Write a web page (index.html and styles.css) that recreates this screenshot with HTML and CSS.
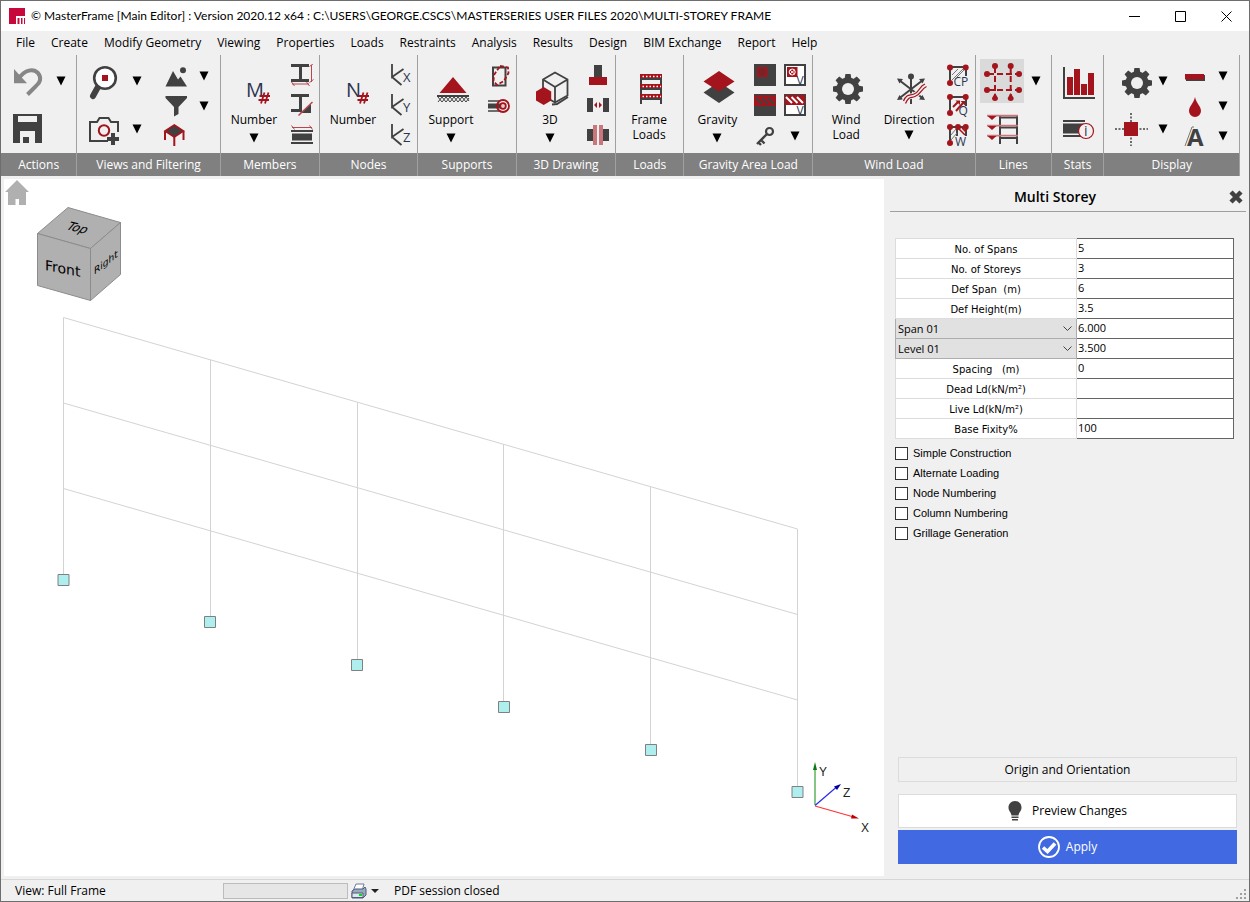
FILE: index.html
```html
<!DOCTYPE html>
<html lang="en">
<head>
<meta charset="utf-8">
<title>MasterFrame</title>
<link rel="stylesheet" href="styles.css">
</head>
<body>
<svg class="defs" aria-hidden="true">
  <defs>
    <symbol id="tri" viewBox="0 0 10 10"><path d="M0.5 0.5H9.5L5 9.5Z" fill="#000"/></symbol>
    <symbol id="gear" viewBox="-15 -15 30 30">
      <g fill="#414141"><circle r="11.5"/>
      <path id="tooth" d="M-3.4-10L-2.6-15H2.6L3.4-10ZM-3.4 10L-2.6 15H2.6L3.4 10Z"/>
      <use href="#tooth" transform="rotate(45)"/><use href="#tooth" transform="rotate(90)"/><use href="#tooth" transform="rotate(135)"/></g>
      <circle r="6" fill="#f0f0f0"/>
    </symbol>
  </defs>
</svg>
<div class="window">
  <header class="titlebar">
    <svg class="logo" viewBox="0 0 16 16"><path fill="#c8073a" d="M0 0H16V16H0Z"/><path fill="#fff" d="M7 8H16V10H7ZM7 8H8.500V16H7ZM10.500 8H12V16H10.500ZM13.500 8H15V16H13.500Z"/></svg>
    <h1 class="title">© MasterFrame [Main Editor] : Version 2020.12 x64 : C:\USERS\GEORGE.CSCS\MASTERSERIES USER FILES 2020\MULTI-STOREY FRAME</h1>
    <div class="win-controls">
      <button aria-label="Minimize"><svg viewBox="0 0 11 11"><path d="M0 5.500H11"/></svg></button>
      <button aria-label="Maximize"><svg viewBox="0 0 11 11"><path d="M.5.5H10.500V10.500H.5Z"/></svg></button>
      <button aria-label="Close"><svg viewBox="0 0 11 11"><path d="M.5.5L10.500 10.500M10.500.5L.5 10.500"/></svg></button>
    </div>
  </header>

  <nav class="menubar">
    <button>File</button><button>Create</button><button>Modify Geometry</button><button>Viewing</button><button>Properties</button><button>Loads</button><button>Restraints</button><button>Analysis</button><button>Results</button><button>Design</button><button>BIM Exchange</button><button>Report</button><button>Help</button>
  </nav>

  <div class="ribbon">
    <section class="group g-actions">
      <div class="tools">
        <div class="stack pair">
          <button aria-label="Undo"><svg class="i40" viewBox="8 61 40 40"><path d="M14 69V83.300H27Z" fill="#868686"/><path d="M19 78C25 70 33 68 38 73C42 78 40 83 36 86L27.500 94.500" fill="none" stroke="#868686" stroke-width="4"/></svg></button>
          <button aria-label="Save"><svg class="i40" viewBox="8 109 40 40"><path d="M13 114H42V143H13Z" fill="#414141"/><path d="M18 116H37V122H18ZM20 131H35V143H29V137H23V143H20Z" fill="#f0f0f0"/></svg></button>
        </div>
        <div class="stack pair arrows"><button aria-label="Undo options"><svg class="tri"><use href="#tri"/></svg></button></div>
      </div>
      <h2>Actions</h2>
    </section>

    <section class="group g-views">
      <div class="tools">
        <div class="stack pair">
          <button aria-label="Zoom"><svg class="i40" viewBox="84 61 40 40"><path d="M98.500 86L93 96" stroke="#414141" stroke-width="6" stroke-linecap="round"/><circle cx="105" cy="78" r="10.800" fill="#fff" stroke="#414141" stroke-width="2.600"/><path d="M102 75H108V81H102Z" fill="#a3141c"/></svg></button>
          <button aria-label="Snapshot"><svg class="i40" viewBox="84 109 40 40"><path d="M108 141H90V122H97L99.500 118H108.500L111 122H118V132" fill="none" stroke="#414141" stroke-width="2"/><circle cx="104" cy="130.500" r="5.200" fill="none" stroke="#a3141c" stroke-width="2"/><path d="M111 133H115V137H119V141H115V145H111V141H107V137H111Z" fill="#414141"/></svg></button>
        </div>
        <div class="stack pair arrows"><button aria-label="Zoom options"><svg class="tri"><use href="#tri"/></svg></button><button aria-label="Snapshot options"><svg class="tri"><use href="#tri"/></svg></button></div>
        <div class="stack trio first-small">
          <button aria-label="Views"><svg class="i24" viewBox="163 64 24 24"><path d="M165.500 86.500L173 71L178 79.500L180.500 76.500L187 86.500Z" fill="#414141"/><circle cx="183" cy="70.300" r="3" fill="#414141"/></svg></button>
          <button aria-label="Filter"><svg class="i24" viewBox="163 94 24 24"><path d="M165.500 96H187V98L178.500 107V114L174 116.500V107L165.500 98Z" fill="#414141"/></svg></button>
          <button aria-label="Surface"><svg class="i24" viewBox="163 124 24 24"><path d="M174.300 125L183.500 131L174.300 137L165 131Z" fill="#414141" stroke="#a3141c" stroke-width="1.600"/><path d="M165 131V140M183.500 131V140M174.300 137V146" stroke="#a3141c" stroke-width="2"/></svg></button>
        </div>
        <div class="stack trio arrows"><button aria-label="View options"><svg class="tri"><use href="#tri"/></svg></button><button aria-label="Filter options"><svg class="tri"><use href="#tri"/></svg></button></div>
      </div>
      <h2>Views and Filtering</h2>
    </section>

    <section class="group g-members">
      <div class="tools">
        <button class="big"><svg class="i40" viewBox="234 69 40 40"><text x="246" y="97" class="glyph g20">M</text><path d="M264.500 92.500L261 103.500M268.500 92.500L265 103.500M259.500 96H270M258.500 100H269" stroke="#a3141c" stroke-width="1.800"/></svg><span>Number</span><svg class="tri"><use href="#tri"/></svg></button>
        <div class="stack trio">
          <button aria-label="Section sizes"><svg class="i24" viewBox="290 64 24 24"><path d="M291 65.500H309M300.500 65V81M291 80.500H309" stroke="#414141" stroke-width="3" fill="none"/><path d="M311.500 65V82M309.500 66.500L313.500 63.500M309.500 82.500L313.500 79.500M292 84H309M291.500 82L294.500 86M306.500 82L309.500 86" stroke="#b8474d" fill="none"/></svg></button>
          <button aria-label="Section axes"><svg class="i24" viewBox="290 94 24 24"><path d="M291 95.500H309M300.500 95V111M291 110.500H302" stroke="#414141" stroke-width="3" fill="none"/><path d="M300 113L311 104V113Z" fill="#414141"/><path d="M298.500 115.500L312.500 102" stroke="#b8474d" stroke-width="1.500"/></svg></button>
          <button aria-label="Member length"><svg class="i24" viewBox="290 124 24 24"><path d="M292 127.500H312M291.500 125.500L294.500 129.500M309.500 125.500L312.500 129.500" stroke="#b8474d"/><path d="M291 131H313M291 143H313" stroke="#414141" stroke-width="2"/><path d="M292 133.500H312V140.500H292Z" fill="#414141"/></svg></button>
        </div>
      </div>
      <h2>Members</h2>
    </section>

    <section class="group g-nodes">
      <div class="tools">
        <button class="big"><svg class="i40" viewBox="333 69 40 40"><text x="346" y="97" class="glyph g20">N</text><path d="M363.500 92.500L360 103.500M367.500 92.500L364 103.500M358.500 96H369M357.500 100H368" stroke="#a3141c" stroke-width="1.800"/></svg><span>Number</span></button>
        <div class="stack trio">
          <button aria-label="X axis"><svg class="i24" viewBox="389 64 24 24"><path d="M392 64V77L403.500 69M392 77L401.500 85" fill="none" stroke="#414141" stroke-width="1.800"/><text x="403" y="82" class="glyph g13">X</text></svg></button>
          <button aria-label="Y axis"><svg class="i24" viewBox="389 94 24 24"><path d="M392 94V107L403.500 99M392 107L401.500 115" fill="none" stroke="#414141" stroke-width="1.800"/><text x="403" y="112" class="glyph g13">Y</text></svg></button>
          <button aria-label="Z axis"><svg class="i24" viewBox="389 124 24 24"><path d="M392 124V137L403.500 129M392 137L401.500 145" fill="none" stroke="#414141" stroke-width="1.800"/><text x="403" y="142" class="glyph g13">Z</text></svg></button>
        </div>
      </div>
      <h2>Nodes</h2>
    </section>

    <section class="group g-supports">
      <div class="tools">
        <button class="big"><svg class="i40" viewBox="431 69 40 40"><path d="M453 77L466.500 93H439.500Z" fill="#a3141c"/><path d="M437 96H469" stroke="#414141" stroke-width="2"/><path d="M438 97L442 102L446 97L450 102L454 97L458 102L462 97L466 102L469 98M438 102L442 97L446 102L450 97L454 102L458 97L462 102L466 97L469 101" fill="none" stroke="#414141"/></svg><span>Support</span><svg class="tri"><use href="#tri"/></svg></button>
        <div class="stack trio">
          <button aria-label="Releases"><svg class="i24" viewBox="487 64 24 24"><path d="M493 67.500H505.500V85.500H493Z" fill="none" stroke="#414141" stroke-width="2"/><path d="M500 66L508 67.500L508.500 73L504 81L497 85L493.500 81L494 75Z" fill="none" stroke="#a3141c" stroke-width="1.800" stroke-dasharray="4 2"/></svg></button>
          <button aria-label="Springs"><svg class="i24" viewBox="487 94 24 24"><path d="M488 101H500M488 111H500" stroke="#414141" stroke-width="1.600"/><path d="M488 103.500H502V108.500H488Z" fill="#414141"/><circle cx="503" cy="106" r="6" fill="none" stroke="#a3141c" stroke-width="1.800"/><circle cx="503" cy="106" r="2.800" fill="#e8c8ca" stroke="#a3141c" stroke-width="1.800"/></svg></button>
        </div>
      </div>
      <h2>Supports</h2>
    </section>

    <section class="group g-drawing">
      <div class="tools">
        <button class="big"><svg class="i40" viewBox="530 69 40 40"><path d="M555 72.500L567.500 79.500V95.500L555 102.500L543 95.500V79.500ZM543 79.500L555 87L567.500 79.500M555 87V102" fill="none" stroke="#414141" stroke-width="1.800"/><path d="M552 104.500L557 104L568 97" fill="none" stroke="#414141" stroke-width="2"/><path d="M543.700 87L551.200 91.500V100.500L543.700 105L536 100.500V91.500Z" fill="#a3141c"/></svg><span>3D</span><svg class="tri"><use href="#tri"/></svg></button>
        <div class="stack trio">
          <button aria-label="Base"><svg class="i24" viewBox="586 64 24 24"><path d="M594 65H602V77H594Z" fill="#414141"/><path d="M589 77H607V85H589Z" fill="#a3141c"/></svg></button>
          <button aria-label="Gap"><svg class="i24" viewBox="586 94 24 24"><path d="M587 98H593V112H587ZM603 98H609V112H603Z" fill="#414141"/><path d="M594 105L597 102V108ZM602 105L599 102V108Z" fill="#a3141c"/></svg></button>
          <button aria-label="Splice"><svg class="i24" viewBox="586 124 24 24"><path d="M587 129H594V141H587ZM602 129H609V141H602Z" fill="#414141"/><path d="M593 125H597V145H593ZM599 125H603V145H599Z" fill="#c9777c"/></svg></button>
        </div>
      </div>
      <h2>3D Drawing</h2>
    </section>

    <section class="group g-loads">
      <div class="tools">
        <button class="big"><svg class="i40" viewBox="629 69 40 40"><path d="M641 74V104M661 74V104M640 79H662M640 89H662M640 99H662" stroke="#414141" stroke-width="2"/><path d="M640 76H662M640 86H662M640 96H662" stroke="#a3141c" stroke-width="4"/><path d="M642.500 76.500H661M642.500 86.500H661M642.500 96.500H661" stroke="#fff" stroke-width="1.600" stroke-dasharray="1.500 2"/></svg><span>Frame<br>Loads</span></button>
      </div>
      <h2>Loads</h2>
    </section>

    <section class="group g-gravity">
      <div class="tools">
        <button class="big"><svg class="i40" viewBox="697 69 40 40"><path d="M719 82L734.500 92.500L719 103L703.500 92.500Z" fill="#414141"/><path d="M719 71L734.500 81.500L719 91.500L703.500 81.500Z" fill="#a3141c"/></svg><span>Gravity</span><svg class="tri"><use href="#tri"/></svg></button>
        <div class="stack trio">
          <button aria-label="Point load"><svg class="i24" viewBox="753 64 24 24"><path d="M754 64H776V86H754Z" fill="#414141"/><path d="M757 67H767.500V77H757Z" fill="#a3141c"/><g fill="none" stroke="#553034"><circle cx="762.200" cy="72" r="3"/><path d="M760 70L764.500 74M764.500 70L760 74"/></g></svg></button>
          <button aria-label="Area load"><svg class="i24" viewBox="753 94 24 24"><path d="M754 94H776V116H754Z" fill="#414141"/><path d="M754 95.500H776V106H754Z" fill="#a3141c"/><path d="M756 98L762 104M762 98L768 104M768 98L774 104" stroke="#414141" stroke-width="2"/></svg></button>
          <button aria-label="Key"><svg class="i24" viewBox="753 124 24 24"><circle cx="769.500" cy="131.500" r="3.500" fill="none" stroke="#414141" stroke-width="2.200"/><path d="M767 134L757 144M761 140L764.500 143.500M758 142L761 145" fill="none" stroke="#414141" stroke-width="2.400"/></svg></button>
        </div>
        <div class="stack trio second-small">
          <button aria-label="Void point load"><svg class="i24" viewBox="783 64 24 24"><path d="M785 65H805V85H785Z" fill="#fff" stroke="#414141" stroke-width="2"/><path d="M787 67H797.500V77H787Z" fill="#a3141c"/><g fill="none" stroke="#fff"><circle cx="792.200" cy="72" r="3"/><path d="M790 70L794.500 74M794.500 70L790 74"/></g><text x="796.500" y="84.500" class="glyph g12">V</text></svg></button>
          <button aria-label="Void area load"><svg class="i24" viewBox="783 94 24 24"><path d="M785 95H805V115H785Z" fill="#fff" stroke="#414141" stroke-width="2"/><path d="M785 95H805V105H785Z" fill="#a3141c"/><path d="M786 97L792 103M791.500 97L797.500 103M797 97L803 103" stroke="#fff" stroke-width="2"/><text x="796.500" y="114.500" class="glyph g12">V</text></svg></button>
          <button aria-label="Key options"><svg class="tri"><use href="#tri"/></svg></button>
        </div>
      </div>
      <h2>Gravity Area Load</h2>
    </section>

    <section class="group g-wind">
      <div class="tools">
        <button class="big"><svg class="i40" viewBox="826 69 40 40"><use href="#gear" x="833" y="74" width="30" height="30"/></svg><span>Wind<br>Load</span></button>
        <button class="big wide"><svg class="i40" viewBox="889 69 40 40"><circle cx="911" cy="76.500" r="3" fill="#414141"/><path d="M911 76V104M899 80L923 98.500M923 80L899 98.500" stroke="#414141" stroke-width="2"/><path d="M897 78.500L903 79L899.500 83.500ZM925 78.500L919 79L922.500 83.500ZM897 100L903 99.500L899.500 95ZM925 100L919 99.500L922.500 95Z" fill="#414141"/><path d="M903.500 101C907 93 910 96 914 94C920 92 919 86 925 84M905.500 103.500C909 95.500 911 98.500 915 96.500C921 94.500 921 89 926.500 86.500" stroke="#f0f0f0" stroke-width="3" fill="none"/><path d="M903.500 101C907 93 910 96 914 94C920 92 919 86 925 84M905.500 103.500C909 95.500 911 98.500 915 96.500C921 94.500 921 89 926.500 86.500" stroke="#a3141c" stroke-width="1.300" fill="none"/></svg><span>Direction</span><svg class="tri"><use href="#tri"/></svg></button>
        <div class="stack trio wind-small">
          <button aria-label="Pressure coefficients"><svg class="i24" viewBox="946 64 24 24"><path d="M950 82V67H966V76" fill="none" stroke="#414141" stroke-width="2"/><path d="M952 75L958 69M952 80L963 69M957 77L965 69" stroke="#777"/><g fill="#a3141c"><circle cx="950" cy="67.500" r="3"/><circle cx="965.700" cy="67.500" r="3"/><circle cx="950" cy="83" r="3"/></g><text x="953.500" y="85.500" class="glyph g12">CP</text></svg></button>
          <button aria-label="Wind pressure"><svg class="i24" viewBox="946 94 24 24"><path d="M950 112V97H966V106" fill="none" stroke="#414141" stroke-width="2"/><path d="M953 107L958 102M956 111L963 103" stroke="#a3141c" stroke-width="2"/><path d="M955.500 100.500H960V105ZM960.500 101H965V105.500Z" fill="#a3141c"/><g fill="#a3141c"><circle cx="950" cy="97" r="3"/><circle cx="965.700" cy="97" r="3"/><circle cx="950" cy="113" r="3"/></g><text x="958.500" y="115" class="glyph g12">Q</text></svg></button>
          <button aria-label="Wind load area"><svg class="i24" viewBox="946 124 24 24"><path d="M950 142V127H966V136M957 127V136" fill="none" stroke="#414141" stroke-width="2"/><path d="M951 135L956 129M951 140L957 133" stroke="#777"/><path d="M958 128L965 135M962 128L966 132" stroke="#a3141c" stroke-width="1.500"/><g fill="#a3141c"><circle cx="950" cy="127" r="3"/><circle cx="958" cy="127" r="3"/><circle cx="965.700" cy="127" r="3"/><circle cx="950" cy="143" r="3"/></g><text x="955" y="145.500" class="glyph g12">W</text></svg></button>
        </div>
      </div>
      <h2>Wind Load</h2>
    </section>

    <section class="group g-lines">
      <div class="tools">
        <div class="stack pair">
          <button class="active" aria-label="Grid lines"><svg class="i44" viewBox="980 60 44 44"><path d="M995 68V98M1010.700 68V98M988 75H1018M988 91H1018" stroke="#a3141c" stroke-width="2" stroke-dasharray="6 3"/><g fill="#a3141c"><circle cx="995" cy="67" r="3"/><circle cx="1010.700" cy="67" r="3"/><circle cx="987" cy="75" r="3"/><circle cx="1019" cy="75" r="3"/><circle cx="987" cy="91" r="3"/><circle cx="1019" cy="91" r="3"/><path d="M995 94L998 99A3 3 0 1 1 992 99ZM1010.700 94L1013.700 99A3 3 0 1 1 1007.700 99Z"/></g></svg></button>
          <button aria-label="Storey levels"><svg class="i40" viewBox="982 109 40 40"><path d="M1000 116V144M1017 116V144M1000 117.500H1017M1000 127.500H1017M1000 138H1017" stroke="#414141" stroke-width="2"/><path d="M987 115.700H1018M987 125.700H1018M987 135.700H1018" stroke="#c9777c" stroke-width="1.800"/><path d="M987.500 116H996.500L992 120ZM987.500 126H996.500L992 130ZM987.500 136H996.500L992 140Z" fill="#a3141c"/></svg></button>
        </div>
        <div class="stack pair arrows"><button aria-label="Grid options"><svg class="tri"><use href="#tri"/></svg></button></div>
      </div>
      <h2>Lines</h2>
    </section>

    <section class="group g-stats">
      <div class="tools">
        <div class="stack pair">
          <button aria-label="Chart"><svg class="i40" viewBox="1059 61 40 40"><path d="M1064 67V98H1095" fill="none" stroke="#414141" stroke-width="2"/><path d="M1067 77H1073V95H1067ZM1074 69H1080V95H1074ZM1081 84H1087V95H1081ZM1088 73H1094V95H1088Z" fill="#a3141c"/></svg></button>
          <button aria-label="Member information"><svg class="i40" viewBox="1059 109 40 40"><path d="M1063 121H1085M1063 136H1081" stroke="#414141" stroke-width="2"/><path d="M1063 123.500H1084V133.500H1063Z" fill="#414141"/><circle cx="1086" cy="131" r="7.500" fill="#f4f0f0" stroke="#a3141c" stroke-width="1.200"/><text x="1084" y="136" class="glyph g14">i</text></svg></button>
        </div>
      </div>
      <h2>Stats</h2>
    </section>

    <section class="group g-display">
      <div class="tools">
        <div class="stack pair">
          <button aria-label="Settings"><svg class="i44" viewBox="1109 60 44 44"><use href="#gear" x="1122" y="69" width="30" height="30"/></svg></button>
          <button aria-label="Node display"><svg class="i44" viewBox="1109 107 44 44"><path d="M1115 129H1148M1131 113V146" stroke="#414141" stroke-width="1.500" stroke-dasharray="2 1.500"/><path d="M1124 122H1138V136H1124Z" fill="#a3141c"/></svg></button>
        </div>
        <div class="stack pair arrows"><button aria-label="Settings options"><svg class="tri"><use href="#tri"/></svg></button><button aria-label="Node display options"><svg class="tri"><use href="#tri"/></svg></button></div>
        <div class="stack trio display-small">
          <button aria-label="Member line"><svg class="i24" viewBox="1183 64 24 24"><path d="M1186 75H1205V81H1186Z" fill="#414141"/><path d="M1185 74H1204V79.500H1185Z" fill="#a3141c"/></svg></button>
          <button aria-label="Colour"><svg class="i24" viewBox="1183 94 24 24"><path d="M1195 97C1196 103 1201 106 1201 111A6 6 0 0 1 1189 111C1189 106 1194 103 1195 97Z" fill="#a3141c"/></svg></button>
          <button aria-label="Text"><svg class="i24 spill" viewBox="1183 124 24 24"><path d="M1185 146L1192 127H1194" fill="none" stroke="#777"/><text x="1187" y="146" class="glyph bold g24">A</text></svg></button>
        </div>
        <div class="stack trio arrows display-arrows"><button aria-label="Line options"><svg class="tri"><use href="#tri"/></svg></button><button aria-label="Colour options"><svg class="tri"><use href="#tri"/></svg></button><button aria-label="Text options"><svg class="tri"><use href="#tri"/></svg></button></div>
      </div>
      <h2>Display</h2>
    </section>
  </div>

  <main class="workspace">
    <div class="canvas">
      <svg class="model" viewBox="4 179 880 697" preserveAspectRatio="xMinYMin meet">
        <path d="M17 180L29 192H26V205H19V199H15.500V205H8V192H5Z" fill="#b0b0b0"/>
        <g stroke="#8c8c8c" fill="#b0b0b0" stroke-linejoin="round">
          <path d="M68 207.500L120.500 222.500L90.500 248.500L37.500 233.500Z"/>
          <path d="M37.500 233.500L90.500 248.500V300.500L37.500 285.500Z"/>
          <path d="M90.500 248.500L120.500 222.500V274.500L90.500 300.500Z"/>
        </g>
        <g class="cube-label">
          <text x="0" y="0" font-size="14" transform="translate(45 270) skewY(11)">Front</text>
          <text class="narrow" x="0" y="0" font-size="10" transform="translate(94 275) skewY(-38)">Right</text>
          <text x="0" y="0" font-size="12" transform="translate(65 229) rotate(14) skewX(-26)">Top</text>
        </g>
        <g stroke="#d3d3d3" fill="none">
          <path d="M63.500 317.500L797.500 529M63.500 403L797.500 614.500M63.500 488.500L797.500 700"/>
          <path d="M63.500 317.500V575M210.500 360V617M357.500 402.500V660M503.500 444.500V702M650.500 487V745M797.500 529V787"/>
        </g>
        <g fill="#afeeee" stroke="#808080">
          <path d="M58 574.500H69V585.500H58ZM204.500 616.500H215.500V627.500H204.500ZM351.500 659.500H362.500V670.500H351.500ZM498.500 701.500H509.500V712.500H498.500ZM645.500 744.500H656.500V755.500H645.500ZM792 786.500H803V797.500H792Z"/>
        </g>
        <path d="M815 805V768" stroke="#5cb35f" stroke-width="1.500"/><path d="M815 762L817 770H813Z" fill="#0a7a10"/>
        <path d="M815 805.500L836 787.500" stroke="#2b2bef" stroke-width="1.200"/><path d="M841 784L837 790L834 786.500Z" fill="#0000a0"/>
        <path d="M815 806L852 816.500" stroke="#f33" stroke-width="1.200"/><path d="M859 818.500L851 818.500L852 814.500Z" fill="#c00000"/>
        <g class="axis-label"><text x="819" y="776">Y</text><text x="843" y="797">Z</text><text x="861" y="832">X</text></g>
      </svg>
    </div>

    <aside class="panel">
      <header class="panel-head">
        <h2>Multi Storey</h2>
        <button aria-label="Close panel"><svg viewBox="0 0 14 14"><path d="M2 2L12 12M12 2L2 12" stroke="#414141" stroke-width="4.500"/></svg></button>
      </header>
      <form class="panel-form">
        <table class="params">
          <tr><th><label for="f1">No. of Spans</label></th><td><input id="f1" value="5"></td></tr>
          <tr><th><label for="f2">No. of Storeys</label></th><td><input id="f2" value="3"></td></tr>
          <tr><th><label for="f3">Def Span&nbsp; (m)</label></th><td><input id="f3" value="6"></td></tr>
          <tr><th><label for="f4">Def Height(m)</label></th><td><input id="f4" value="3.5"></td></tr>
          <tr><th class="pick"><div class="select"><select aria-label="Span"><option>Span 01</option></select><svg viewBox="0 0 9 5"><path d="M.5.5L4.500 4.500L8.500.5"/></svg></div></th><td><input aria-label="Span length" value="6.000"></td></tr>
          <tr><th class="pick"><div class="select"><select aria-label="Level"><option>Level 01</option></select><svg viewBox="0 0 9 5"><path d="M.5.5L4.500 4.500L8.500.5"/></svg></div></th><td><input aria-label="Level height" value="3.500"></td></tr>
          <tr><th><label for="f7">Spacing&nbsp;&nbsp; (m)</label></th><td><input id="f7" value="0"></td></tr>
          <tr><th><label for="f8">Dead Ld(kN/m²)</label></th><td><input id="f8"></td></tr>
          <tr><th><label for="f9">Live Ld(kN/m²)</label></th><td><input id="f9"></td></tr>
          <tr><th><label for="f10">Base Fixity%</label></th><td><input id="f10" value="100"></td></tr>
        </table>
        <div class="checks">
          <label><input type="checkbox">Simple Construction</label>
          <label><input type="checkbox">Alternate Loading</label>
          <label><input type="checkbox">Node Numbering</label>
          <label><input type="checkbox">Column Numbering</label>
          <label><input type="checkbox">Grillage Generation</label>
        </div>
        <div class="panel-actions">
          <button type="button" class="origin">Origin and Orientation</button>
          <button type="button" class="preview"><svg viewBox="0 0 14 20"><path d="M7 0C11 0 13.500 3 13.500 6.500C13.500 10 11 11 10.500 14.500H3.500C3 11 .5 10 .5 6.500C.5 3 3 0 7 0ZM3.500 15.500H10.500V17H3.500ZM4 18H10V19.500H4Z" fill="#414141"/></svg>Preview Changes</button>
          <button type="button" class="apply"><svg viewBox="0 0 22 22"><circle cx="11" cy="11" r="10" fill="none" stroke="#fff" stroke-width="1.800"/><path d="M5 11.500L9.500 15.500L17 7.500" fill="none" stroke="#fff" stroke-width="3.600"/></svg>Apply</button>
        </div>
      </form>
    </aside>
  </main>

  <footer class="statusbar">
    <span class="view">View: Full Frame</span>
    <div class="progress"></div>
    <button class="print" aria-label="Print"><svg viewBox="0 0 28 16"><path d="M5 1H13L11 8H2Z" fill="#fff" stroke="#6d7c99"/><path d="M1 8L4 6H12L14 4L15 6V12L12 15H1Z" fill="#9aa9c2" stroke="#4d5c79"/><path d="M1 10H12V14.500H1Z" fill="#dfe5ef" stroke="#4d5c79"/><path d="M8 11H11V13H8Z" fill="#0bdc1c"/><path d="M20 6H28L24 10Z" fill="#222"/></svg></button>
    <span>PDF session closed</span>
    <svg class="grip" viewBox="0 0 10 10"><path d="M8 0H10V2H8ZM4 4H6V6H4ZM8 4H10V6H8ZM0 8H2V10H0ZM4 8H6V10H4ZM8 8H10V10H8Z" fill="#a0a0a0"/></svg>
  </footer>
</div>
</body>
</html>
```
FILE: styles.css
```css
* { box-sizing: border-box; }
body {
  margin: 0;
  font: 12px/16px "Open Sans", "Noto Sans", sans-serif;
  color: #000;
}
button, input, select { font: inherit; color: inherit; margin: 0; }
button { background: none; border: 0; padding: 0; }
svg { display: block; flex: none; }
h1, h2 { margin: 0; font: inherit; }
.defs { position: absolute; width: 0; height: 0; }

.window {
  display: flex;
  flex-direction: column;
  min-height: 100vh;
  border: 1px solid #6e6e6e;
  background: #f0f0f0;
}

.titlebar {
  display: flex;
  align-items: center;
  height: 30px;
  padding-left: 8px;
  background: #fff;
}
.logo { width: 16px; height: 16px; }
.title {
  flex: 1;
  padding-left: 6px;
  font-family: Lato, sans-serif;
  white-space: nowrap;
}
.win-controls { display: flex; }
.win-controls button {
  width: 46px;
  height: 30px;
  display: grid;
  place-items: center;
}
.win-controls svg { width: 11px; height: 11px; fill: none; stroke: #000; }

.menubar {
  display: flex;
  gap: 16px;
  height: 24px;
  padding-left: 15px;
  white-space: nowrap;
}

.ribbon { display: flex; padding-right: 9px; }
.group {
  display: flex;
  flex-direction: column;
  min-width: 0;
  border-right: 1px solid #a0a0a0;
}
.group h2 {
  height: 23px;
  line-height: 23px;
  background: #808080;
  color: #fff;
  text-align: center;
  white-space: nowrap;
}
.tools { display: flex; height: 98px; padding-left: 5px; }
.g-actions { flex: 76 1 0; }
.g-views { flex: 144 1 0; }
.g-members, .g-supports, .g-drawing { flex: 99 1 0; }
.g-nodes { flex: 98 1 0; }
.g-loads { flex: 68 1 0; }
.g-gravity { flex: 129 1 0; }
.g-wind { flex: 163 1 0; }
.g-lines { flex: 76 1 0; }
.g-stats { flex: 52 1 0; }
.g-display { flex: 136 1 0; }
.g-actions .tools, .g-views .tools, .g-stats .tools { padding-left: 7px; }
.g-lines .tools { padding-left: 4px; }

.stack { display: flex; flex-direction: column; flex: none; }
.stack button { display: grid; place-items: center; }
.pair { padding-top: 2px; }
.pair button { height: 48px; }
.trio { padding-top: 6px; }
.trio button { height: 30px; }
.stack.arrows { width: 20px; }
.pair + .arrows { margin-left: 3px; }
.g-lines .arrows { margin-left: 2px; }
.g-display .pair + .arrows { margin-left: 0; }
.first-small { margin-left: 16px; }
.first-small + .arrows { margin-left: 7px; }
.big + .trio { margin-left: 8px; }
.stack.second-small { margin-left: 6px; }
.big + .wind-small { margin-left: 5px; }
.display-small { margin-left: 10px; }
.display-arrows { margin-left: 6px; }
.stack .active { background: linear-gradient(#dadada, #dadada) center / 44px 44px no-repeat; }

.big {
  display: flex;
  flex-direction: column;
  align-items: center;
  flex: none;
  width: 56px;
  padding-top: 14px;
  line-height: 15px;
}
.big span { margin-top: 3px; }
.big .tri { margin-top: 6px; }
.big.wide { width: 64px; margin-left: 3px; }
.big.wide .tri { margin-top: 3px; }
.i24 { width: 24px; height: 24px; }
.i40 { width: 40px; height: 40px; }
.i44 { width: 44px; height: 44px; }
.spill { overflow: visible; }
.tri { width: 10px; height: 10px; }
.glyph { fill: #2b3550; font-family: "Open Sans", sans-serif; }
.g12 { font-size: 12px; }
.g13 { font-size: 13px; }
.g14 { font-size: 14px; }
.g20 { font-size: 20px; }
.g24 { font-size: 24px; }
.bold { font-weight: 700; fill: #414141; }

.workspace { display: flex; flex: 1; padding: 3px 0 3px 3px; }
.canvas { flex: 1; min-width: 0; background: #fff; }
.model { width: 100%; height: auto; }
.cube-label { font-family: "DejaVu Sans", sans-serif; }
.cube-label .narrow { font-family: "DejaVu Sans Condensed", "DejaVu Sans", sans-serif; }
.axis-label { font: 12px "Liberation Sans", sans-serif; fill: #222; }

.panel {
  display: flex;
  flex-direction: column;
  flex: none;
  width: 365px;
  padding: 4px 3px 12px 6px;
}
.panel-head {
  display: flex;
  align-items: center;
  height: 29px;
  border-bottom: 1px solid #a0a0a0;
}
.panel-head h2 {
  flex: 1;
  padding-right: 6px;
  text-align: center;
  font-size: 14px;
  font-weight: 600;
}
.panel-head button { width: 20px; display: grid; place-items: center; }
.panel-head svg { width: 14px; height: 14px; }
.panel-form {
  display: flex;
  flex-direction: column;
  flex: 1;
  padding: 26px 9px 0 5px;
}

.params { width: 339px; max-width: 100%; table-layout: fixed; border-collapse: collapse; font-size: 11px; }
.params tr { height: 20px; }
.params th, .params td { padding: 0; background: #fff; }
.params th {
  width: 181px;
  border: 1px solid #dcdcdc;
  font: 10px/16px "DejaVu Sans", sans-serif;
}
.params label { display: block; padding-top: 3px; }
.params td { border: 1px solid #646464; }
.params input {
  display: block;
  width: 100%;
  height: 19px;
  padding: 0 0 3px 1px;
  border: 0;
  background: none;
}
.params th.pick { border-color: #adadad; background: #e1e1e1; }
.select { position: relative; }
.select select {
  display: block;
  appearance: none;
  width: 100%;
  height: 19px;
  padding: 0 2px;
  border: 0;
  background: none;
  font: 11px/16px "Open Sans", sans-serif;
}
.select svg {
  position: absolute;
  right: 4px;
  top: 7px;
  width: 9px;
  height: 5px;
  fill: none;
  stroke: #444;
}

.checks {
  display: flex;
  flex-direction: column;
  padding-top: 4px;
  font-family: "Liberation Sans", sans-serif;
  font-size: 11px;
}
.checks label { display: flex; align-items: center; gap: 5px; height: 20px; }
.checks input {
  appearance: none;
  width: 13px;
  height: 13px;
  border: 1px solid #333;
  background: #fff;
}

.panel-actions { display: flex; flex-direction: column; margin-top: auto; padding-left: 3px; }
.panel-actions button { display: flex; align-items: center; justify-content: center; }
.origin, .preview { border: 1px solid #dcdcdc; }
.origin { height: 25px; margin-bottom: 12px; }
.panel-actions .preview { height: 34px; margin-bottom: 2px; gap: 10px; background: #fff; }
.preview svg { width: 14px; height: 20px; }
.panel-actions .apply { height: 34px; gap: 6px; background: #4169e1; color: #fff; }
.apply svg { width: 22px; height: 22px; }

.statusbar {
  display: flex;
  align-items: center;
  height: 22px;
  padding: 0 3px 0 14px;
  border-top: 1px solid #d7d7d7;
}
.view { width: 208px; }
.progress { width: 125px; height: 16px; border: 1px solid #bcbcbc; background: #e6e6e6; }
.print { margin: 0 15px 0 3px; }
.print svg { width: 28px; height: 16px; }
.grip { width: 10px; height: 10px; margin: 6px 0 0 auto; }
```
